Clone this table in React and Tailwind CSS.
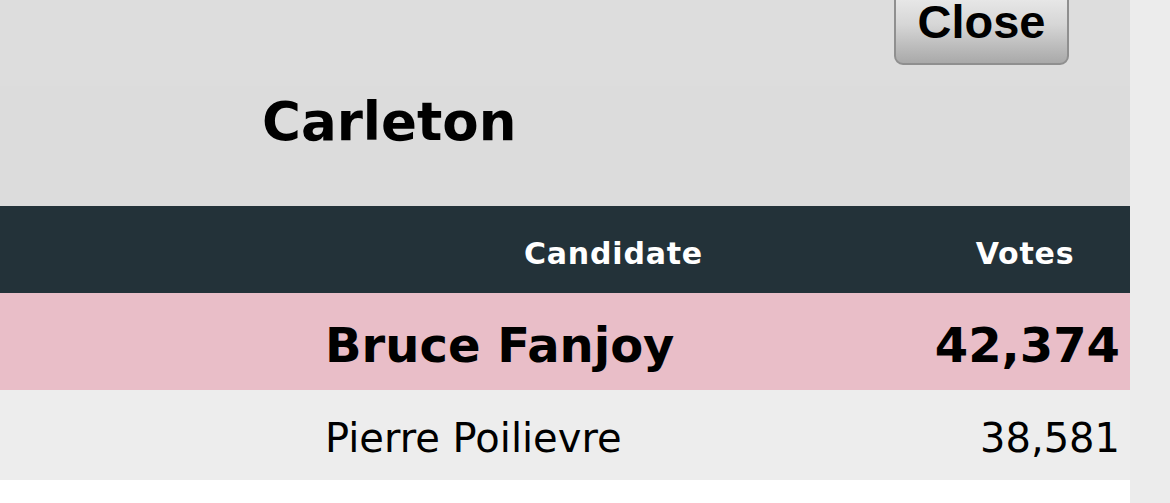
export default function App() {
  const verdana = { fontFamily: '"DejaVu Sans", Verdana, sans-serif' };
  return (
    <div className="flex h-[503px] w-[1170px] overflow-hidden bg-[#ececec]" style={verdana}>
      <div className="flex w-[1130px] flex-col bg-white">
        <header className="bg-[#dcdcdc]">
          <div className="flex h-[86px] justify-end bg-[#dddddd] pr-[61px]">
            <button className="-mt-[16px] flex h-[81px] w-[175px] items-end justify-center rounded-[9px] border-2 border-[#8f8f8f] bg-gradient-to-b from-[#f0f0f0] via-[#d6d6d6] to-[#a9a9a9] pb-[18px] font-['Liberation_Sans',Arial,sans-serif] text-[47px] font-bold leading-none text-black">
              Close
            </button>
          </div>
          <div className="flex h-[120px] items-start pl-[262px]">
            <h1 className="text-[53px] font-bold leading-[72px] text-black">Carleton</h1>
          </div>
        </header>
        <div className="flex h-[87px] items-center bg-[#233239] pt-[8px] text-[30px] font-bold tracking-[0.8px] text-white">
          <div className="w-[325px]" />
          <div className="w-[577px] text-center">Candidate</div>
          <div className="w-[18px]" />
          <div className="w-[210px] text-center">Votes</div>
        </div>
        <div className="flex h-[97px] items-center bg-[#e9bec8] pt-[6px] text-[48px] font-bold text-black">
          <div className="w-[325px]" />
          <div className="flex-1">Bruce Fanjoy</div>
          <div className="pr-[10px] text-right">42,374</div>
        </div>
        <div className="flex h-[90px] items-center bg-[#ededed] pt-[5px] text-[40px] text-black">
          <div className="w-[325px]" />
          <div className="flex-1">Pierre Poilievre</div>
          <div className="pr-[10px] text-right">38,581</div>
        </div>
        <div className="flex-1 bg-white" />
      </div>
    </div>
  );
}
